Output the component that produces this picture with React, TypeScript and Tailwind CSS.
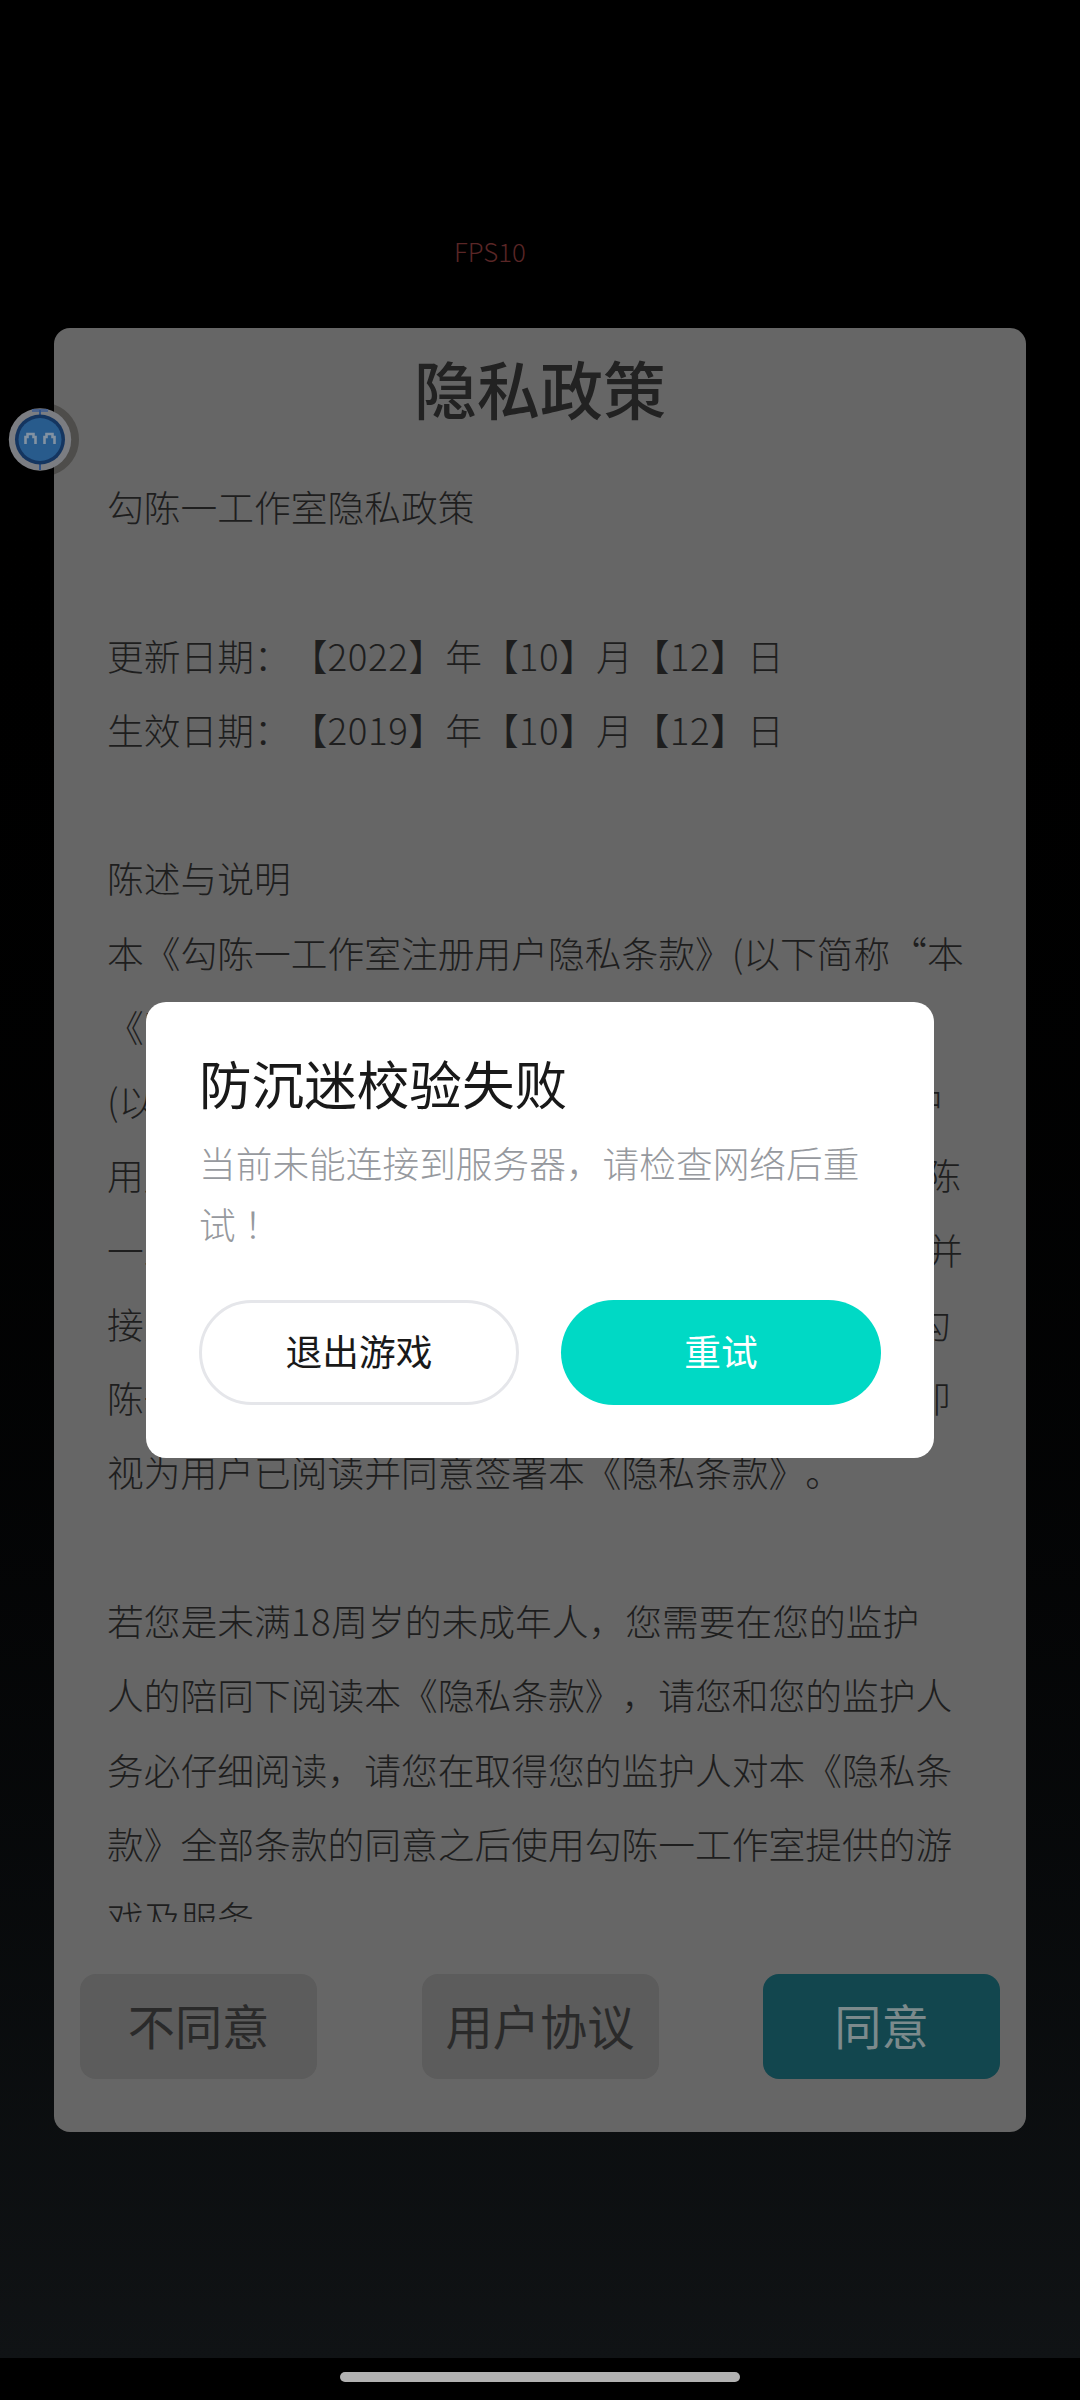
interface PolicyLine {
  text: string;
  end?: string;
}

const policy: PolicyLine[] = [
  { text: "勾陈一工作室隐私政策" },
  { text: "" },
  { text: "更新日期：【2022】年【10】月【12】日" },
  { text: "生效日期：【2019】年【10】月【12】日" },
  { text: "" },
  { text: "陈述与说明" },
  { text: "本《勾陈一工作室注册用户隐私条款》(以下简称“本" },
  { text: "《隐" },
  { text: "(以", end: "中" },
  { text: "用户", end: "陈" },
  { text: "一工", end: "并" },
  { text: "接受", end: "勾" },
  { text: "陈一", end: "即" },
  { text: "视为用户已阅读并同意签署本《隐私条款》。" },
  { text: "" },
  { text: "若您是未满18周岁的未成年人，您需要在您的监护" },
  { text: "人的陪同下阅读本《隐私条款》，请您和您的监护人" },
  { text: "务必仔细阅读，请您在取得您的监护人对本《隐私条" },
  { text: "款》全部条款的同意之后使用勾陈一工作室提供的游" },
  { text: "戏及服务。" },
];

// right padding of the ragged lines
const ragged: Record<string, string> = {
  中: "pr-[20px]",
  陈: "pr-[2px]",
  并: "pr-0",
  勾: "pr-[12px]",
  即: "pr-[12px]",
};

// digits are set slightly wider than the surrounding characters
function LineText({ text }: { text: string }) {
  return (
    <span>
      {text.split(/(\d+)/).map((part, i) =>
        /\d/.test(part) ? (
          <span key={i} className="tracking-[0.6px]">
            {part}
          </span>
        ) : (
          part
        )
      )}
    </span>
  );
}

function FloatingBall() {
  return (
    <svg className="absolute left-0 top-[395px]" width="84" height="90" viewBox="0 0 84 90">
      <path d="M54 9.5A37 37 0 0 1 54 79.5Z" fill="#4e4d4b" />
      <circle cx="40" cy="44.5" r="31.2" fill="#7b7d82" />
      <path d="M32 15.5h16" stroke="#4a628c" strokeWidth="3" />
      <path d="M40 15v6M40 68v7" stroke="#2f5288" strokeWidth="2" />
      <circle cx="40" cy="44.5" r="25" fill="#143560" />
      <circle cx="40" cy="44.5" r="21.5" fill="#285b8c" />
      <path d="M25.5 49v-7h2v-3h6v3h2v7M44.5 49v-7h2v-3h6v3h2v7" fill="none" stroke="#8292a2" strokeWidth="2.6" />
    </svg>
  );
}

export default function App() {
  return (
    <div className="relative flex h-[2400px] w-[1080px] flex-col overflow-hidden bg-black font-['Noto_Sans_CJK_SC',sans-serif] [text-spacing-trim:space-all]">
      <div className="flex h-[2358px] flex-col bg-gradient-to-b from-black from-15% to-[#101315] px-[54px]">
        <div className="h-[328px] pl-[400px] pt-[232px] text-[25.8px] font-light leading-[38px] text-[#5a2626]">FPS10</div>

        <div className="flex h-[1804px] flex-col rounded-2xl bg-[#666]">
          <h1 className="h-[142px] pt-[14px] text-center text-[63px] font-medium leading-[90px] text-[#222]">隐私政策</h1>
          <div className="h-[1452px] overflow-hidden pl-[53px] text-[36.75px] font-light leading-[72.5px] text-[#1e1e1e]">
            {policy.map((line, i) => (
              <p
                key={i}
                className={`flex h-[74.27px] w-[856px] justify-between whitespace-nowrap ${line.end ? ragged[line.end] : ""}`}
              >
                <LineText text={line.text} />
                {line.end && <span>{line.end}</span>}
              </p>
            ))}
          </div>
          <div className="mt-[52px] flex justify-between px-[26px] text-[47.2px] leading-[101px] text-[#2a2a2a]">
            <button className="h-[105px] w-[237px] rounded-2xl bg-[#5c5c5c] pb-[5px]">不同意</button>
            <button className="h-[105px] w-[237px] rounded-2xl bg-[#5c5c5c] pb-[5px]">用户协议</button>
            <button className="h-[105px] w-[237px] rounded-2xl bg-[#12464e] pb-[5px] text-[#7c8a8c]">同意</button>
          </div>
        </div>
      </div>
      <div className="flex grow justify-center pt-[14px]">
        <div className="h-[10px] w-[400px] rounded-full bg-[#b2b2b2]" />
      </div>

      <FloatingBall />

      <div className="absolute left-[146px] top-[1002px] h-[456px] w-[788px] rounded-[20px] bg-white px-[53px] pt-[42px]">
        <h2 className="text-[52.6px] leading-[76px] text-[#191919]">防沉迷校验失败</h2>
        <p className="mt-[12px] whitespace-nowrap text-[36.7px] font-light leading-[61px] text-[#96999e]">
          当前未能连接到服务器，请检查网络后重
          <br />
          试<span className="pl-[8px]">！</span>
        </p>
        <div className="mt-[46px] flex justify-between text-[36.7px] leading-[95px]">
          <button className="h-[105px] w-[320px] rounded-full border-[3px] border-[#e5e6ea] pb-[4px] text-[#191919]">退出游戏</button>
          <button className="h-[105px] w-[320px] rounded-full bg-[#00d9c5] pb-[4px] text-white">重试</button>
        </div>
      </div>
    </div>
  );
}
